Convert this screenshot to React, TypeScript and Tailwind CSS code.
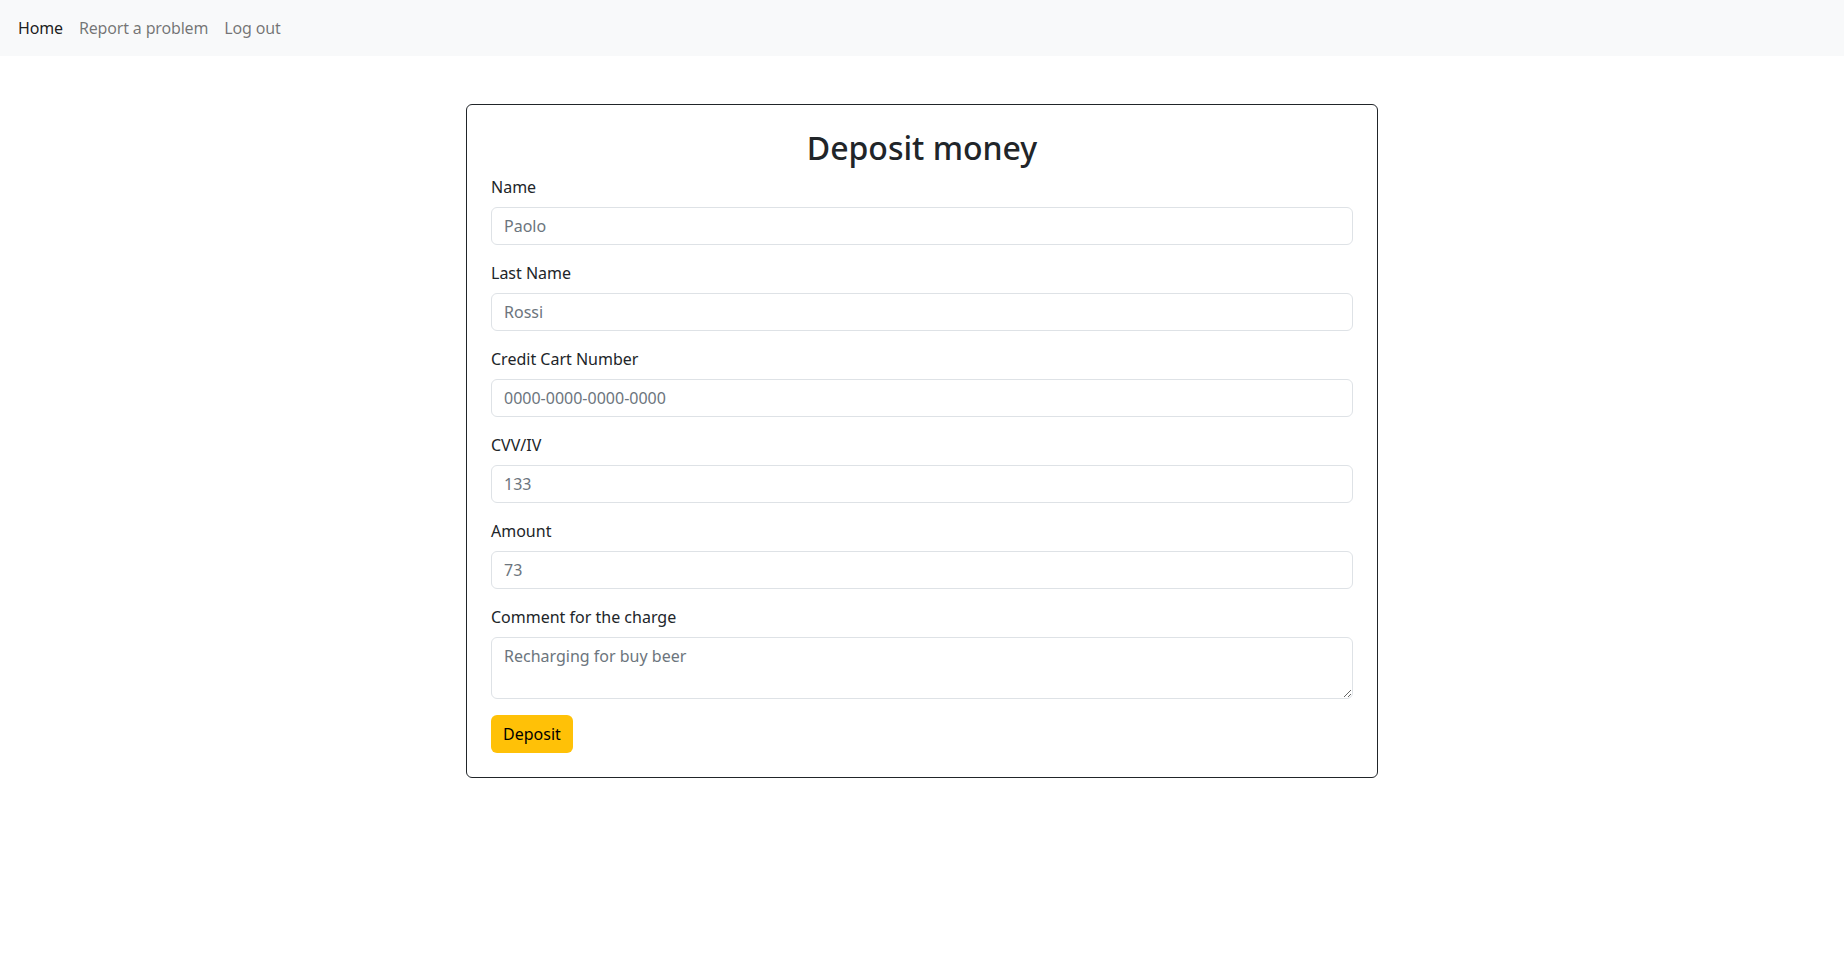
import React, { useState } from 'react';

const fontStack = { fontFamily: '"Noto Sans", "Open Sans", sans-serif' };

const fields = [
  { id: 'name', label: 'Name', placeholder: 'Paolo' },
  { id: 'lastName', label: 'Last Name', placeholder: 'Rossi' },
  { id: 'card', label: 'Credit Cart Number', placeholder: '0000-0000-0000-0000' },
  { id: 'cvv', label: 'CVV/IV', placeholder: '133' },
  { id: 'amount', label: 'Amount', placeholder: '73' },
];

const inputClass =
  'block w-full h-[38px] rounded-[6px] border border-[#dee2e6] bg-white px-3 text-base text-[#212529] placeholder:text-[#6c757d] focus:outline-none';

const App: React.FC = () => {
  const [values, setValues] = useState<Record<string, string>>({});
  const [comment, setComment] = useState('');

  return (
    <div className="min-h-screen bg-white text-[#212529]" style={fontStack}>
      <nav className="h-14 bg-[#f8f9fa] flex items-center pl-[18px]">
        <ul className="flex items-center gap-4 text-base tracking-[-0.01em]">
          <li><a href="#" className="text-black/90">Home</a></li>
          <li><a href="#" className="text-black/55">Report a problem</a></li>
          <li><a href="#" className="text-black/55">Log out</a></li>
        </ul>
      </nav>

      <main className="pt-12">
        <div className="mx-auto w-[912px] rounded-[6px] border border-[#212529] p-6">
          <h2 className="text-center text-[32px] font-medium leading-[1.2] mb-2">Deposit money</h2>
          {fields.map(f => (
            <div key={f.id} className="mb-4">
              <label htmlFor={f.id} className="block mb-2 leading-6">{f.label}</label>
              <input
                id={f.id}
                type="text"
                placeholder={f.placeholder}
                value={values[f.id] ?? ''}
                onChange={(e) => setValues(prev => ({ ...prev, [f.id]: e.target.value }))}
                className={inputClass}
              />
            </div>
          ))}
          <div className="mb-4">
            <label htmlFor="comment" className="block mb-2 leading-6">Comment for the charge</label>
            <textarea
              id="comment"
              rows={2}
              placeholder="Recharging for buy beer"
              value={comment}
              onChange={(e) => setComment(e.target.value)}
              className="block w-full h-[62px] rounded-[6px] border border-[#dee2e6] bg-white px-3 py-[6px] text-base leading-6 text-[#212529] placeholder:text-[#6c757d] focus:outline-none"
            />
          </div>
          <button className="h-[38px] rounded-[6px] bg-[#ffc107] px-3 text-base text-black">Deposit</button>
        </div>
      </main>
    </div>
  );
};

export default App;
